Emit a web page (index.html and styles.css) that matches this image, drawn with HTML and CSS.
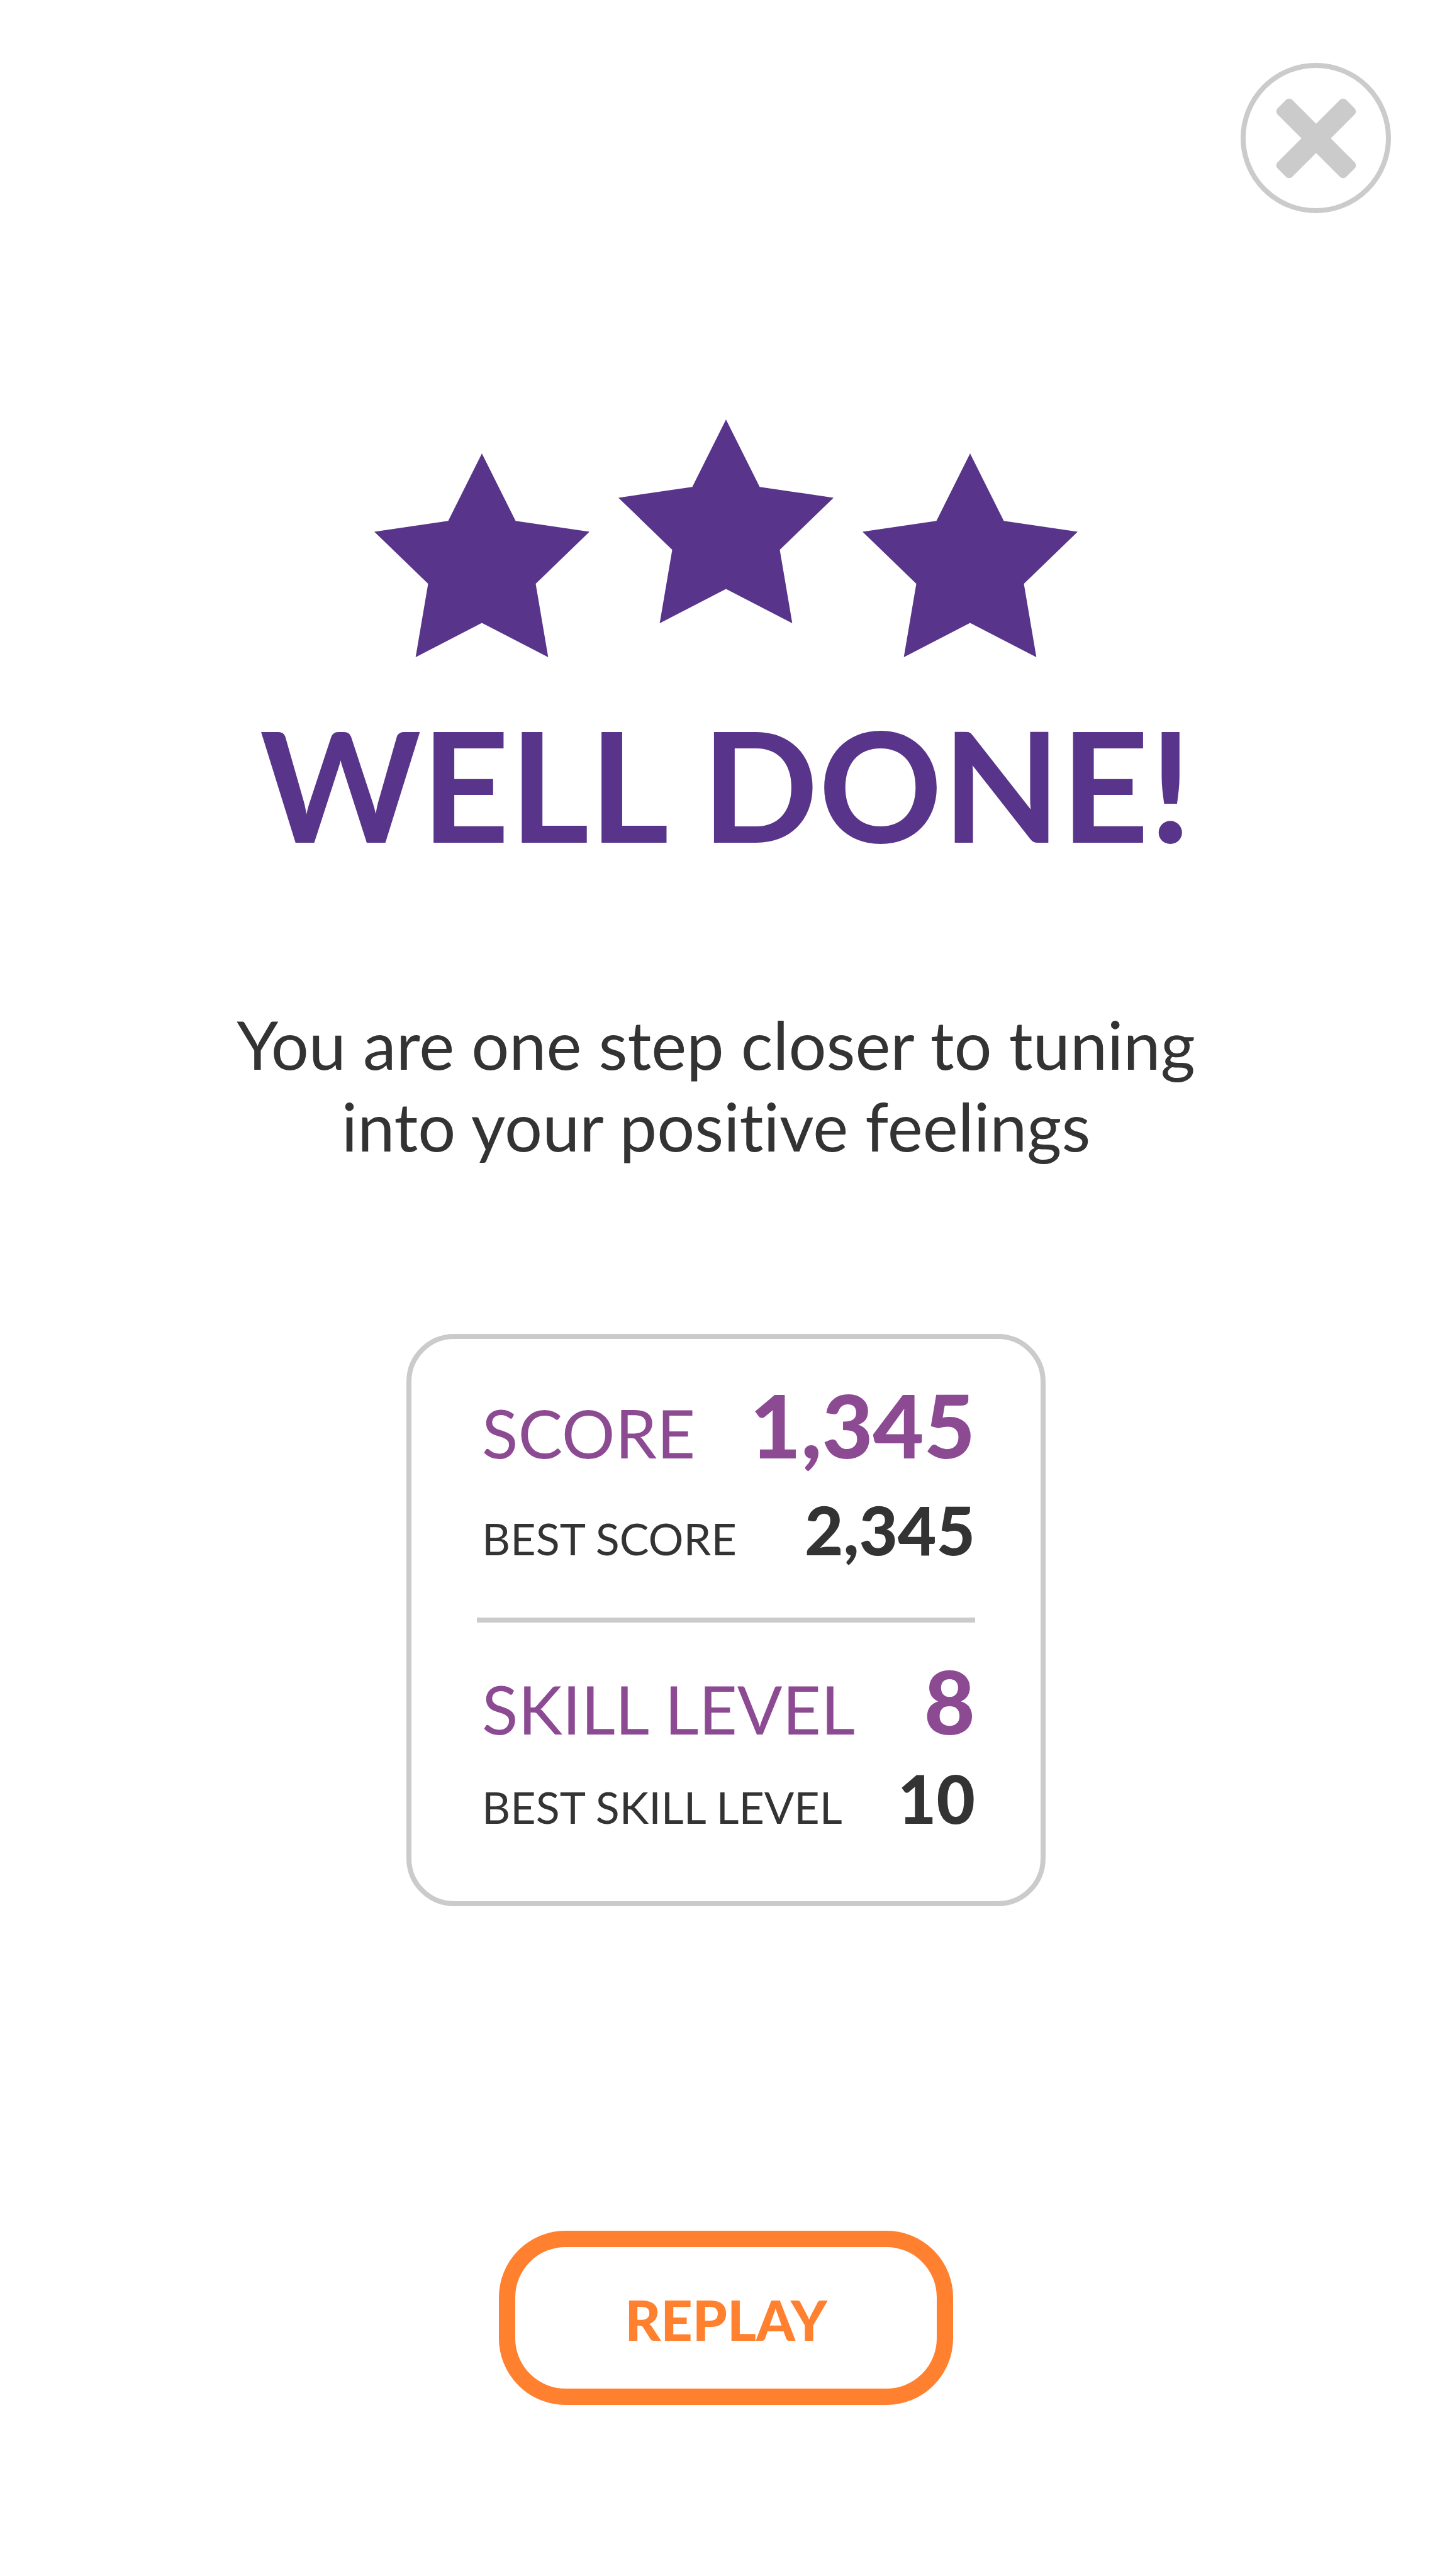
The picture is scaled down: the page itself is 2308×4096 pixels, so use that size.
FILE: index.html
```html
<!DOCTYPE html>
<html lang="en">
<head>
<meta charset="utf-8">
<meta name="viewport" content="width=device-width, initial-scale=1">
<title>Well done!</title>
<link rel="stylesheet" href="styles.css">
</head>
<body>
<header class="topbar">
  <button class="close" type="button" aria-label="Close">
    <svg class="close-icon" viewBox="-75 -75 150 150" aria-hidden="true">
      <rect x="-89" y="-19" width="178" height="38" rx="8" transform="rotate(45)"/>
      <rect x="-89" y="-19" width="178" height="38" rx="8" transform="rotate(-45)"/>
    </svg>
  </button>
</header>
<main class="result">
  <div class="stars" role="img" aria-label="3 of 3 stars">
    <svg class="star" viewBox="0 0 396 375"><path d="M198 0 260 124 396 144 297 240 320 375 198 312 76 375 99 240 0 144 136 124Z"/></svg>
    <svg class="star star-top" viewBox="0 0 396 375"><path d="M198 0 260 124 396 144 297 240 320 375 198 312 76 375 99 240 0 144 136 124Z"/></svg>
    <svg class="star" viewBox="0 0 396 375"><path d="M198 0 260 124 396 144 297 240 320 375 198 312 76 375 99 240 0 144 136 124Z"/></svg>
  </div>
  <h1 class="title">WELL DONE!</h1>
  <p class="message">You are one step closer to tuning<br>into your positive feelings</p>
  <section class="card" aria-label="Results">
    <dl class="group">
      <div class="row current"><dt>SCORE</dt><dd>1,345</dd></div>
      <div class="row best"><dt>BEST SCORE</dt><dd>2,345</dd></div>
    </dl>
    <hr class="divider">
    <dl class="group group-tight">
      <div class="row current"><dt>SKILL LEVEL</dt><dd>8</dd></div>
      <div class="row best"><dt>BEST SKILL LEVEL</dt><dd>10</dd></div>
    </dl>
  </section>
  <button class="replay" type="button">REPLAY</button>
</main>
</body>
</html>
```
FILE: styles.css
```css
* {
  box-sizing: border-box;
}

body {
  margin: 0;
  background: #fff;
  color: #333;
  font-family: Lato, "Open Sans", sans-serif;
  font-variant-ligatures: none;
}

.topbar {
  display: flex;
  justify-content: flex-end;
  padding: 100px 97px 0;
}

.close {
  display: flex;
  align-items: center;
  justify-content: center;
  width: 239px;
  height: 239px;
  padding: 0;
  border: 8px solid #cbcbcb;
  border-radius: 50%;
  background: none;
}

.close-icon {
  width: 130px;
  height: 130px;
  fill: #cbcbcb;
}

.result {
  display: flex;
  flex-direction: column;
  align-items: center;
  padding: 328px 48px 272px;
}

.stars {
  display: flex;
  align-items: flex-end;
  gap: 46px;
}

.star {
  width: 342px;
  height: 324px;
  fill: #58358b;
}

.star-top {
  margin-bottom: 54px;
}

.title {
  margin: 78px 0 0;
  color: #58358b;
  font-size: 244px;
  font-weight: 700;
  line-height: 246px;
  text-align: center;
}

.message {
  margin: 226px 0 0;
  padding-right: 32px;
  font-size: 106px;
  line-height: 130px;
  text-align: center;
}

.card {
  width: 100%;
  max-width: 1016px;
  margin-top: 266px;
  padding: 76px 104px 90px;
  border: 8px solid #cbcbcb;
  border-radius: 76px;
}

.group {
  display: flex;
  flex-direction: column;
  gap: 34px;
  margin: 0;
  padding: 0 0 0 8px;
}

.group-tight {
  gap: 22px;
}

.row {
  display: flex;
  align-items: baseline;
  justify-content: space-between;
  line-height: 120px;
}

.row dd {
  margin: 0;
  font-weight: 900;
}

.current {
  color: #8c4a93;
  font-size: 106px;
}

.current dd {
  font-size: 140px;
}

.best {
  font-size: 70px;
}

.best dd {
  font-size: 106px;
}

.divider {
  height: 8px;
  margin: 66px 0 64px;
  border: 0;
  background: #cbcbcb;
}

.replay {
  width: 722px;
  height: 277px;
  margin-top: 516px;
  padding: 4px 0 0;
  border: 26px solid #ff802f;
  border-radius: 106px;
  background: none;
  color: #ff802f;
  font-family: inherit;
  font-size: 88px;
  font-weight: 900;
}
```
